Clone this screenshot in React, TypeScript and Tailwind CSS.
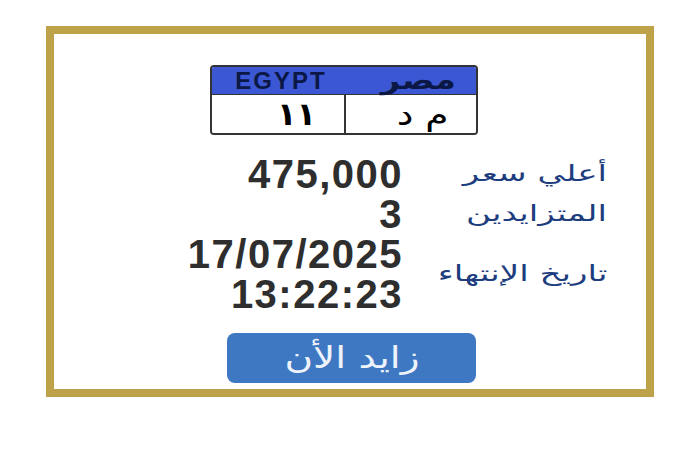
import React from "react";

const arabic = "font-['DejaVu_Sans','Noto_Sans',sans-serif]";
const latin = "font-['Liberation_Sans',Arial,sans-serif]";

const Row = ({ values, label }: { values: string[]; label: string }) => (
  <div className="flex items-center">
    <div className={`w-[349px] text-right text-[40px] font-bold leading-[40px] tracking-[1.5px] text-[#2e2e2e] ${latin}`}>
      {values.map((v) => (
        <div key={v}>{v}</div>
      ))}
    </div>
    <div dir="rtl" className="w-[204px] text-right">
      <span className={`inline-block origin-right scale-x-[1.55] text-[22px] leading-[40px] text-[#1d3d7e] ${arabic}`}>
        {label}
      </span>
    </div>
  </div>
);

const Plate = () => (
  <div className="ml-[156px] w-[268px] overflow-hidden rounded-[4px] border-2 border-[#333]">
    <div className="flex h-[27px] items-center bg-[#3b57d4]">
      <div className={`w-[132px] pl-[6px] text-center text-[24px] font-bold leading-none tracking-[2px] text-[#0b1846] ${latin}`}>
        EGYPT
      </div>
      <div dir="rtl" className="flex-1 pr-[20px] text-right">
        <span className={`inline-block origin-right scale-x-[1.3] text-[26px] font-bold leading-none text-[#0b1846] ${arabic}`}>
          مصر
        </span>
      </div>
    </div>
    <div className="flex h-[39px] border-t border-[#333] bg-white">
      <div className={`flex w-[132px] items-center justify-end pr-[28px] text-[32px] font-bold text-black ${arabic}`}>
        ١١
      </div>
      <div className="w-[2px] bg-[#333]" />
      <div dir="rtl" className="flex flex-1 items-center pr-[28px]">
        <span className={`inline-block origin-right scale-x-[1.25] text-[30px] text-black ${arabic}`}>م د</span>
      </div>
    </div>
  </div>
);

export default function App() {
  return (
    <div className="h-[450px] w-[700px] bg-white pl-[46px] pt-[26px]">
      <div className="h-[371px] w-[608px] border-[8px] border-[#bea24a] bg-white pt-[31px]">
        <Plate />
        <div className="mt-[19px]">
          <Row values={["475,000"]} label="أعلي سعر" />
          <Row values={["3"]} label="المتزايدين" />
          <Row values={["17/07/2025", "13:22:23"]} label="تاريخ الإنتهاء" />
        </div>
        <button
          className={`ml-[173px] mt-[19px] flex h-[50px] w-[249px] items-center justify-center rounded-[8px] bg-[#3f78c2] text-[#eef3fb] ${arabic}`}
        >
          <span className="inline-block scale-x-[1.3] text-[30px] leading-none">زايد الأن</span>
        </button>
      </div>
    </div>
  );
}
